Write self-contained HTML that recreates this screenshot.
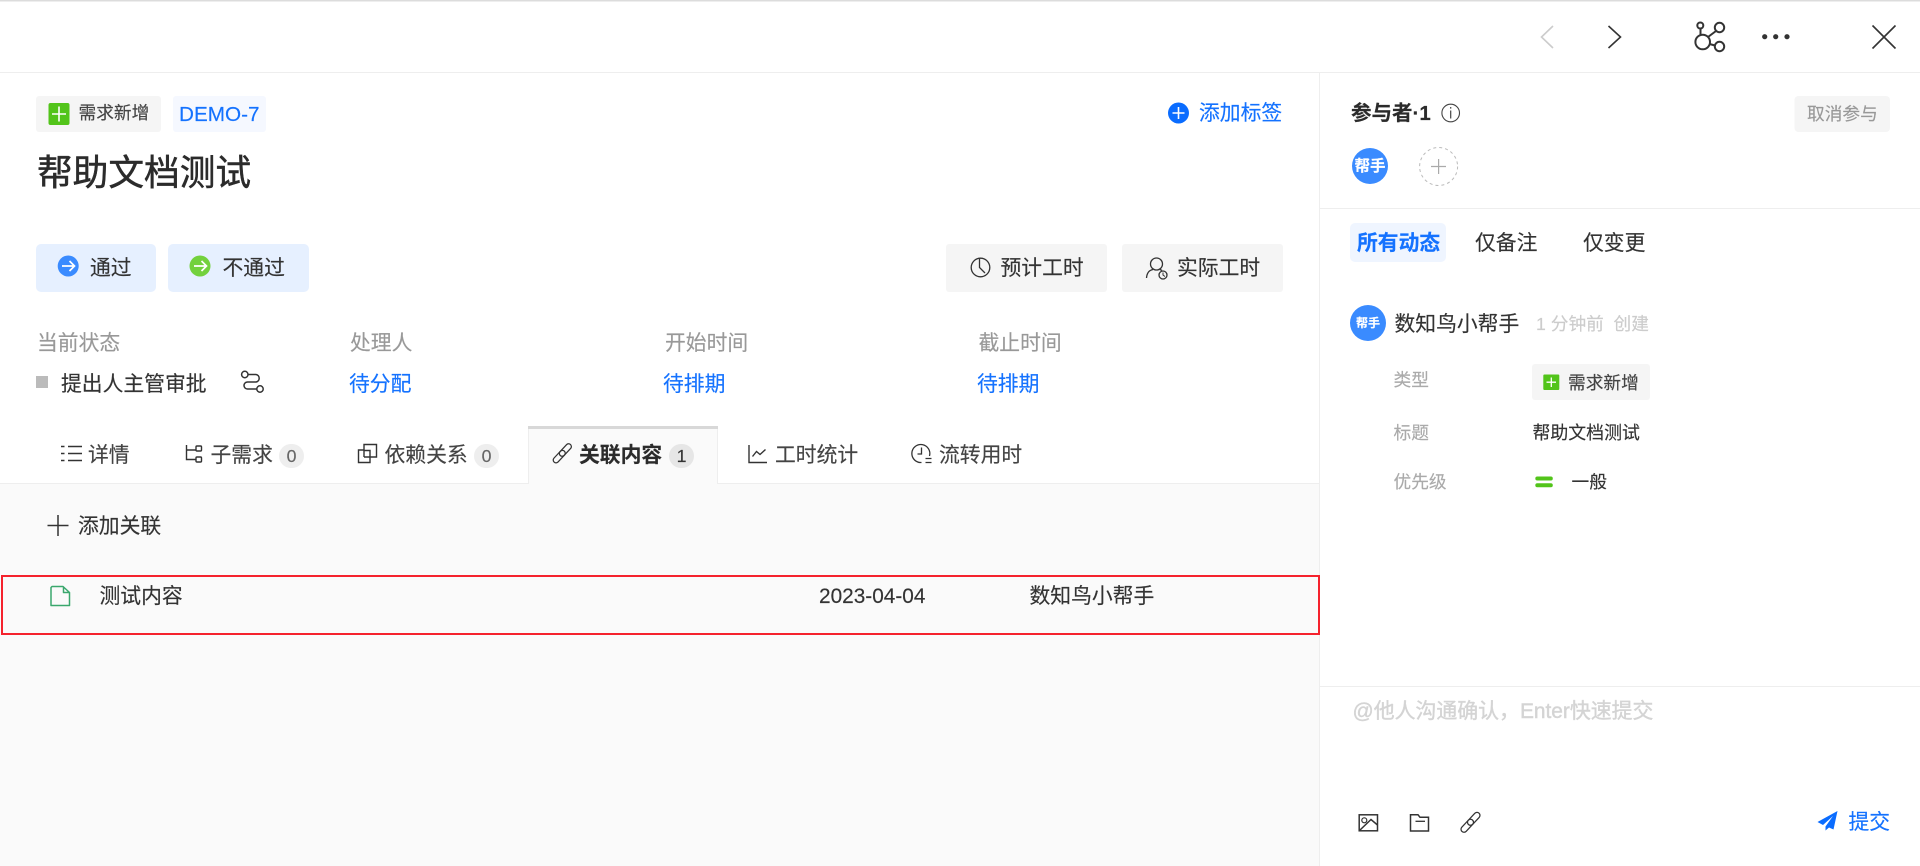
<!DOCTYPE html>
<html lang="zh-CN">
<head>
<meta charset="utf-8">
<title>帮助文档测试</title>
<style>
html,body{margin:0;padding:0;background:#fff;width:1920px;height:866px;overflow:hidden}
body{position:relative;font-family:"Liberation Sans","Noto Sans CJK SC",sans-serif;color:#333}
svg.a{position:absolute;left:0;top:0}
.t{position:absolute;white-space:nowrap;line-height:30px;height:30px;font-size:20.8px;color:#333;-webkit-text-stroke:.15px currentColor}
.s{font-size:17.7px}
.g{color:#999}
.b{color:#1472ff}
</style>
</head>
<body>
<svg class="a" width="1920" height="866" viewBox="0 0 1920 866" fill="none">
  <rect x="0" y="0" width="1920" height="1.5" fill="#dcdcdc"/>
  <rect x="0" y="72" width="1920" height="1" fill="#eee"/>
  <rect x="0" y="483" width="1319" height="383" fill="#fafafa"/>
  <rect x="0" y="483" width="1319" height="1" fill="#eee"/>
  <rect x="1319" y="72" width="1" height="794" fill="#eee"/>
  <rect x="1320" y="208" width="600" height="1" fill="#eee"/>
  <rect x="1320" y="686" width="600" height="1" fill="#eee"/>

  <!-- top bar -->
  <path d="M1553 26 L1541.5 37 L1553 48" stroke="#ccc" stroke-width="1.6"/>
  <path d="M1608.5 26 L1620.5 37 L1608.5 48" stroke="#333" stroke-width="1.6"/>
  <g stroke="#333" stroke-width="2">
    <circle cx="1702.7" cy="42" r="7.3"/>
    <circle cx="1700.3" cy="25.5" r="3"/>
    <circle cx="1719.5" cy="27.5" r="4.7"/>
    <circle cx="1719.5" cy="46.5" r="4.7"/>
    <path d="M1700.5 28.5 V35 M1708 37 L1716 31 M1709.5 44 L1715 45.5"/>
  </g>
  <circle cx="1764.7" cy="36.7" r="2.6" fill="#333"/>
  <circle cx="1775.7" cy="36.7" r="2.6" fill="#333"/>
  <circle cx="1787" cy="36.7" r="2.6" fill="#333"/>
  <path d="M1872.5 25.5 L1895.5 48.5 M1895.5 25.5 L1872.5 48.5" stroke="#333" stroke-width="1.6"/>

  <!-- tags -->
  <rect x="36" y="96" width="125" height="36" rx="3" fill="#f5f5f5"/>
  <rect x="48.5" y="103" width="21" height="22" rx="2" fill="#52c41a"/>
  <path d="M59 106.5 V121.5 M52 114 H66" stroke="#fff" stroke-width="1.6"/>
  <rect x="173" y="96" width="93" height="36" rx="3" fill="#f5f8ff"/>
  <circle cx="1178.5" cy="113" r="10.5" fill="#0a6cff"/>
  <path d="M1178.5 107 V119 M1172.5 113 H1184.5" stroke="#fff" stroke-width="1.6"/>

  <!-- action buttons -->
  <rect x="36" y="244" width="120" height="48" rx="5" fill="#e6f0ff"/>
  <circle cx="68.2" cy="266" r="10.5" fill="#3a8bff"/>
  <path d="M62 266 H74 M69.5 261 L74.5 266 L69.5 271" stroke="#fff" stroke-width="1.7"/>
  <rect x="168" y="244" width="141" height="48" rx="5" fill="#e6f0ff"/>
  <circle cx="200" cy="266" r="10.5" fill="#73d13d"/>
  <path d="M194 266 H206 M201.5 261 L206.5 266 L201.5 271" stroke="#fff" stroke-width="1.7"/>
  <rect x="946" y="244" width="161" height="48" rx="3" fill="#f5f5f5"/>
  <rect x="1122" y="244" width="161" height="48" rx="3" fill="#f5f5f5"/>
  <g stroke="#333" stroke-width="1.3">
    <circle cx="980.5" cy="267.5" r="9.3"/>
    <path d="M979.5 258.5 V267.5 L985 273"/>
    <circle cx="1156.5" cy="264" r="6"/>
    <path d="M1146.5 278 C1147 272 1150 270 1153 269.5 M1160 269.5 L1162 270.5"/>
    <circle cx="1163" cy="275" r="4"/>
    <path d="M1163 272.5 V275 L1165 276.5" stroke-width="1"/>
  </g>

  <!-- status -->
  <rect x="36" y="376" width="12" height="12" fill="#bbb"/>
  <g stroke="#333" stroke-width="1.5">
    <circle cx="244.8" cy="374.5" r="3.2"/>
    <circle cx="260" cy="389" r="3.2"/>
    <path d="M248 374.5 H256 A3.8 3.8 0 0 1 256 382 H247.5 A3.5 3.5 0 0 0 247.5 389 H256.8"/>
  </g>

  <!-- tabs -->
  <rect x="528" y="426" width="190" height="58" fill="#fafafa"/>
  <rect x="528" y="426" width="190" height="3" fill="#d8d8d8"/>
  <rect x="528" y="429" width="1" height="55" fill="#eee"/>
  <rect x="717" y="429" width="1" height="55" fill="#eee"/>
  <g stroke="#333" stroke-width="1.4">
    <path d="M61 446.5 H64.5 M61 453.5 H64.5 M61 460.5 H64.5 M68 446.5 H82 M68 453.5 H82 M68 460.5 H82"/>
    <path d="M186.5 445 V459.5 H196 M186.5 450 H196"/>
    <rect x="196" y="446" width="5.5" height="5" rx="1"/>
    <rect x="196" y="457" width="5.5" height="5" rx="1"/>
    <path d="M364 450 H358.5 V462.5 H370 V457 M364 457 V444.5 H376.5 V457 H364 M364 450.5 H370 V457"/>
    <g transform="translate(562.3 453.3) rotate(-47)" stroke-width="1.25">
      <rect x="-12" y="-2.8" width="15" height="5.6" rx="2.8"/>
      <rect x="-3" y="-2.8" width="15" height="5.6" rx="2.8"/>
    </g>
    <path d="M749 445 V462.5 H767 M752.5 456.5 L756.5 451.5 L760 454.5 L765.5 449.5"/>
    <path d="M929.5 456 A9 9 0 1 0 921.5 462.5 M921.5 447.5 V454 H917.5 M925.5 458.5 H931.5 M925.5 462.5 H931.5" stroke-width="1.3"/>
  </g>
  <rect x="279" y="444" width="25" height="24" rx="12" fill="#eee"/>
  <rect x="474" y="444" width="25" height="24" rx="12" fill="#eee"/>
  <rect x="669" y="444" width="25" height="24" rx="12" fill="#e6e6e6"/>

  <!-- add relation -->
  <path d="M58 515 V536 M47.5 525.5 H68.5" stroke="#333" stroke-width="1.5"/>

  <!-- red box -->
  <rect x="2" y="576" width="1317" height="58" stroke="#f5222d" stroke-width="2"/>
  <path d="M52 586.5 H63 L69.5 592.5 V605.5 H51 V587.5 Z M63.5 587 V592.5 H69.5" stroke="#3aa76d" stroke-width="1.5" stroke-linejoin="round"/>

  <!-- right panel head -->
  <circle cx="1450.7" cy="113" r="8.8" stroke="#444" stroke-width="1.1"/>
  <path d="M1450.7 110.5 V118.5 M1450.7 107 V108.6" stroke="#444" stroke-width="1.2"/>
  <rect x="1794.5" y="96" width="95.5" height="36" rx="4" fill="#f5f5f5"/>
  <circle cx="1370" cy="166" r="18" fill="#3a8bff"/>
  <circle cx="1438.6" cy="166.5" r="19" stroke="#bbb" stroke-width="1" stroke-dasharray="3 3"/>
  <path d="M1438.6 159 V174 M1431 166.5 H1446" stroke="#aaa" stroke-width="1.2"/>
  <rect x="1350" y="223" width="96" height="39" rx="5" fill="#eff5ff"/>

  <!-- activity -->
  <circle cx="1368" cy="323" r="18" fill="#3a8bff"/>
  <rect x="1532" y="364" width="118" height="36" rx="3" fill="#f5f5f5"/>
  <rect x="1543.3" y="374.5" width="16" height="15.5" rx="1" fill="#52c41a"/>
  <path d="M1551.3 377.5 V387 M1546.5 382.2 H1556" stroke="#fff" stroke-width="1.3"/>
  <rect x="1535.3" y="476.5" width="17.5" height="4" rx="2" fill="#52c41a"/>
  <rect x="1535.3" y="483.3" width="17.5" height="4" rx="2" fill="#52c41a"/>

  <!-- composer icons -->
  <g stroke="#333" stroke-width="1.5">
    <rect x="1359.2" y="814.8" width="18.3" height="16"/>
    <circle cx="1364.3" cy="820.3" r="2.5" stroke-width="1.2"/>
    <path d="M1359.5 830.5 L1371 819.5 L1377.5 825"/>
    <path d="M1410.5 831 V814.8 H1418 L1420 817.3 H1428.5 V831 Z"/>
    <path d="M1415.5 821.3 H1425" stroke-width="1.3"/>
    <g transform="translate(1470.5 822.3) rotate(-47)" stroke-width="1.25">
      <rect x="-12.5" y="-3" width="15.5" height="6" rx="3"/>
      <rect x="-3" y="-3" width="15.5" height="6" rx="3"/>
    </g>
  </g>
  <path d="M1837.5 811 L1817.5 822 L1823 825 L1833 816 L1825.5 826.5 L1825.5 830.5 L1829 827.5 L1833.5 829.5 Z" fill="#0a6cff"/>
</svg>

<div class="t s" style="left:78.5px;top:98px;color:#444">需求新增</div>
<div class="t b" style="left:179px;top:100px;font-size:20.7px">DEMO-7</div>
<div class="t b" style="left:1199px;top:99px">添加标签</div>
<div class="t" style="left:37px;top:153px;font-size:35.7px;line-height:40px;height:40px;color:#2b2b2b;-webkit-text-stroke:.5px #2b2b2b">帮助文档测试</div>

<div class="t" style="left:90px;top:254px">通过</div>
<div class="t" style="left:222.5px;top:254px">不通过</div>
<div class="t" style="left:1000.5px;top:254px">预计工时</div>
<div class="t" style="left:1177px;top:254px">实际工时</div>

<div class="t g" style="left:37px;top:329px">当前状态</div>
<div class="t g" style="left:350px;top:329px">处理人</div>
<div class="t g" style="left:665px;top:329px">开始时间</div>
<div class="t g" style="left:978.5px;top:329px">截止时间</div>
<div class="t" style="left:61px;top:370px">提出人主管审批</div>
<div class="t b" style="left:349px;top:370px">待分配</div>
<div class="t b" style="left:663px;top:370px">待排期</div>
<div class="t b" style="left:977px;top:370px">待排期</div>

<div class="t" style="left:88px;top:441px;color:#444">详情</div>
<div class="t" style="left:210.5px;top:441px;color:#444">子需求</div>
<div class="t s g" style="left:279px;top:441px;width:25px;text-align:center;color:#666">0</div>
<div class="t" style="left:384.5px;top:441px;color:#444">依赖关系</div>
<div class="t s g" style="left:474px;top:441px;width:25px;text-align:center;color:#666">0</div>
<div class="t" style="left:579px;top:441px;font-weight:700;color:#2b2b2b">关联内容</div>
<div class="t s" style="left:669px;top:441px;width:25px;text-align:center">1</div>
<div class="t" style="left:775px;top:441px;color:#444">工时统计</div>
<div class="t" style="left:939px;top:441px;color:#444">流转用时</div>

<div class="t" style="left:78px;top:512px">添加关联</div>
<div class="t" style="left:99.5px;top:582px">测试内容</div>
<div class="t" style="left:819px;top:582px">2023-04-04</div>
<div class="t" style="left:1029.5px;top:582px">数知鸟小帮手</div>

<div class="t" style="left:1351px;top:99px;font-weight:700;font-size:20.5px;color:#2b2b2b">参与者·1</div>
<div class="t s g" style="left:1807px;top:99px">取消参与</div>
<div class="t" style="left:1352px;top:152px;width:36px;text-align:center;color:#fff;font-size:15.5px;font-weight:700">帮手</div>

<div class="t b" style="left:1357px;top:229px;font-weight:700">所有动态</div>
<div class="t" style="left:1475px;top:229px">仅备注</div>
<div class="t" style="left:1583px;top:229px">仅变更</div>

<div class="t" style="left:1350px;top:308px;width:36px;text-align:center;color:#fff;font-size:12px;font-weight:700">帮手</div>
<div class="t" style="left:1394.5px;top:310px">数知鸟小帮手</div>
<div class="t s" style="left:1536px;top:309px;color:#ccc">1 分钟前</div>
<div class="t s" style="left:1613.5px;top:309px;color:#ccc">创建</div>

<div class="t s" style="left:1393.5px;top:365px;color:#aaa">类型</div>
<div class="t s" style="left:1568px;top:368px;color:#444">需求新增</div>
<div class="t s" style="left:1393.5px;top:418px;color:#aaa">标题</div>
<div class="t s" style="left:1532.5px;top:418px;font-size:17.9px">帮助文档测试</div>
<div class="t s" style="left:1393.5px;top:467px;color:#aaa">优先级</div>
<div class="t s" style="left:1571.5px;top:467px">一般</div>

<div class="t" style="left:1352.5px;top:697px;color:#d4d4d4;font-size:20.9px;-webkit-text-stroke:.4px #d4d4d4">@他人沟通确认，Enter快速提交</div>
<div class="t b" style="left:1848.5px;top:808px">提交</div>
</body>
</html>
